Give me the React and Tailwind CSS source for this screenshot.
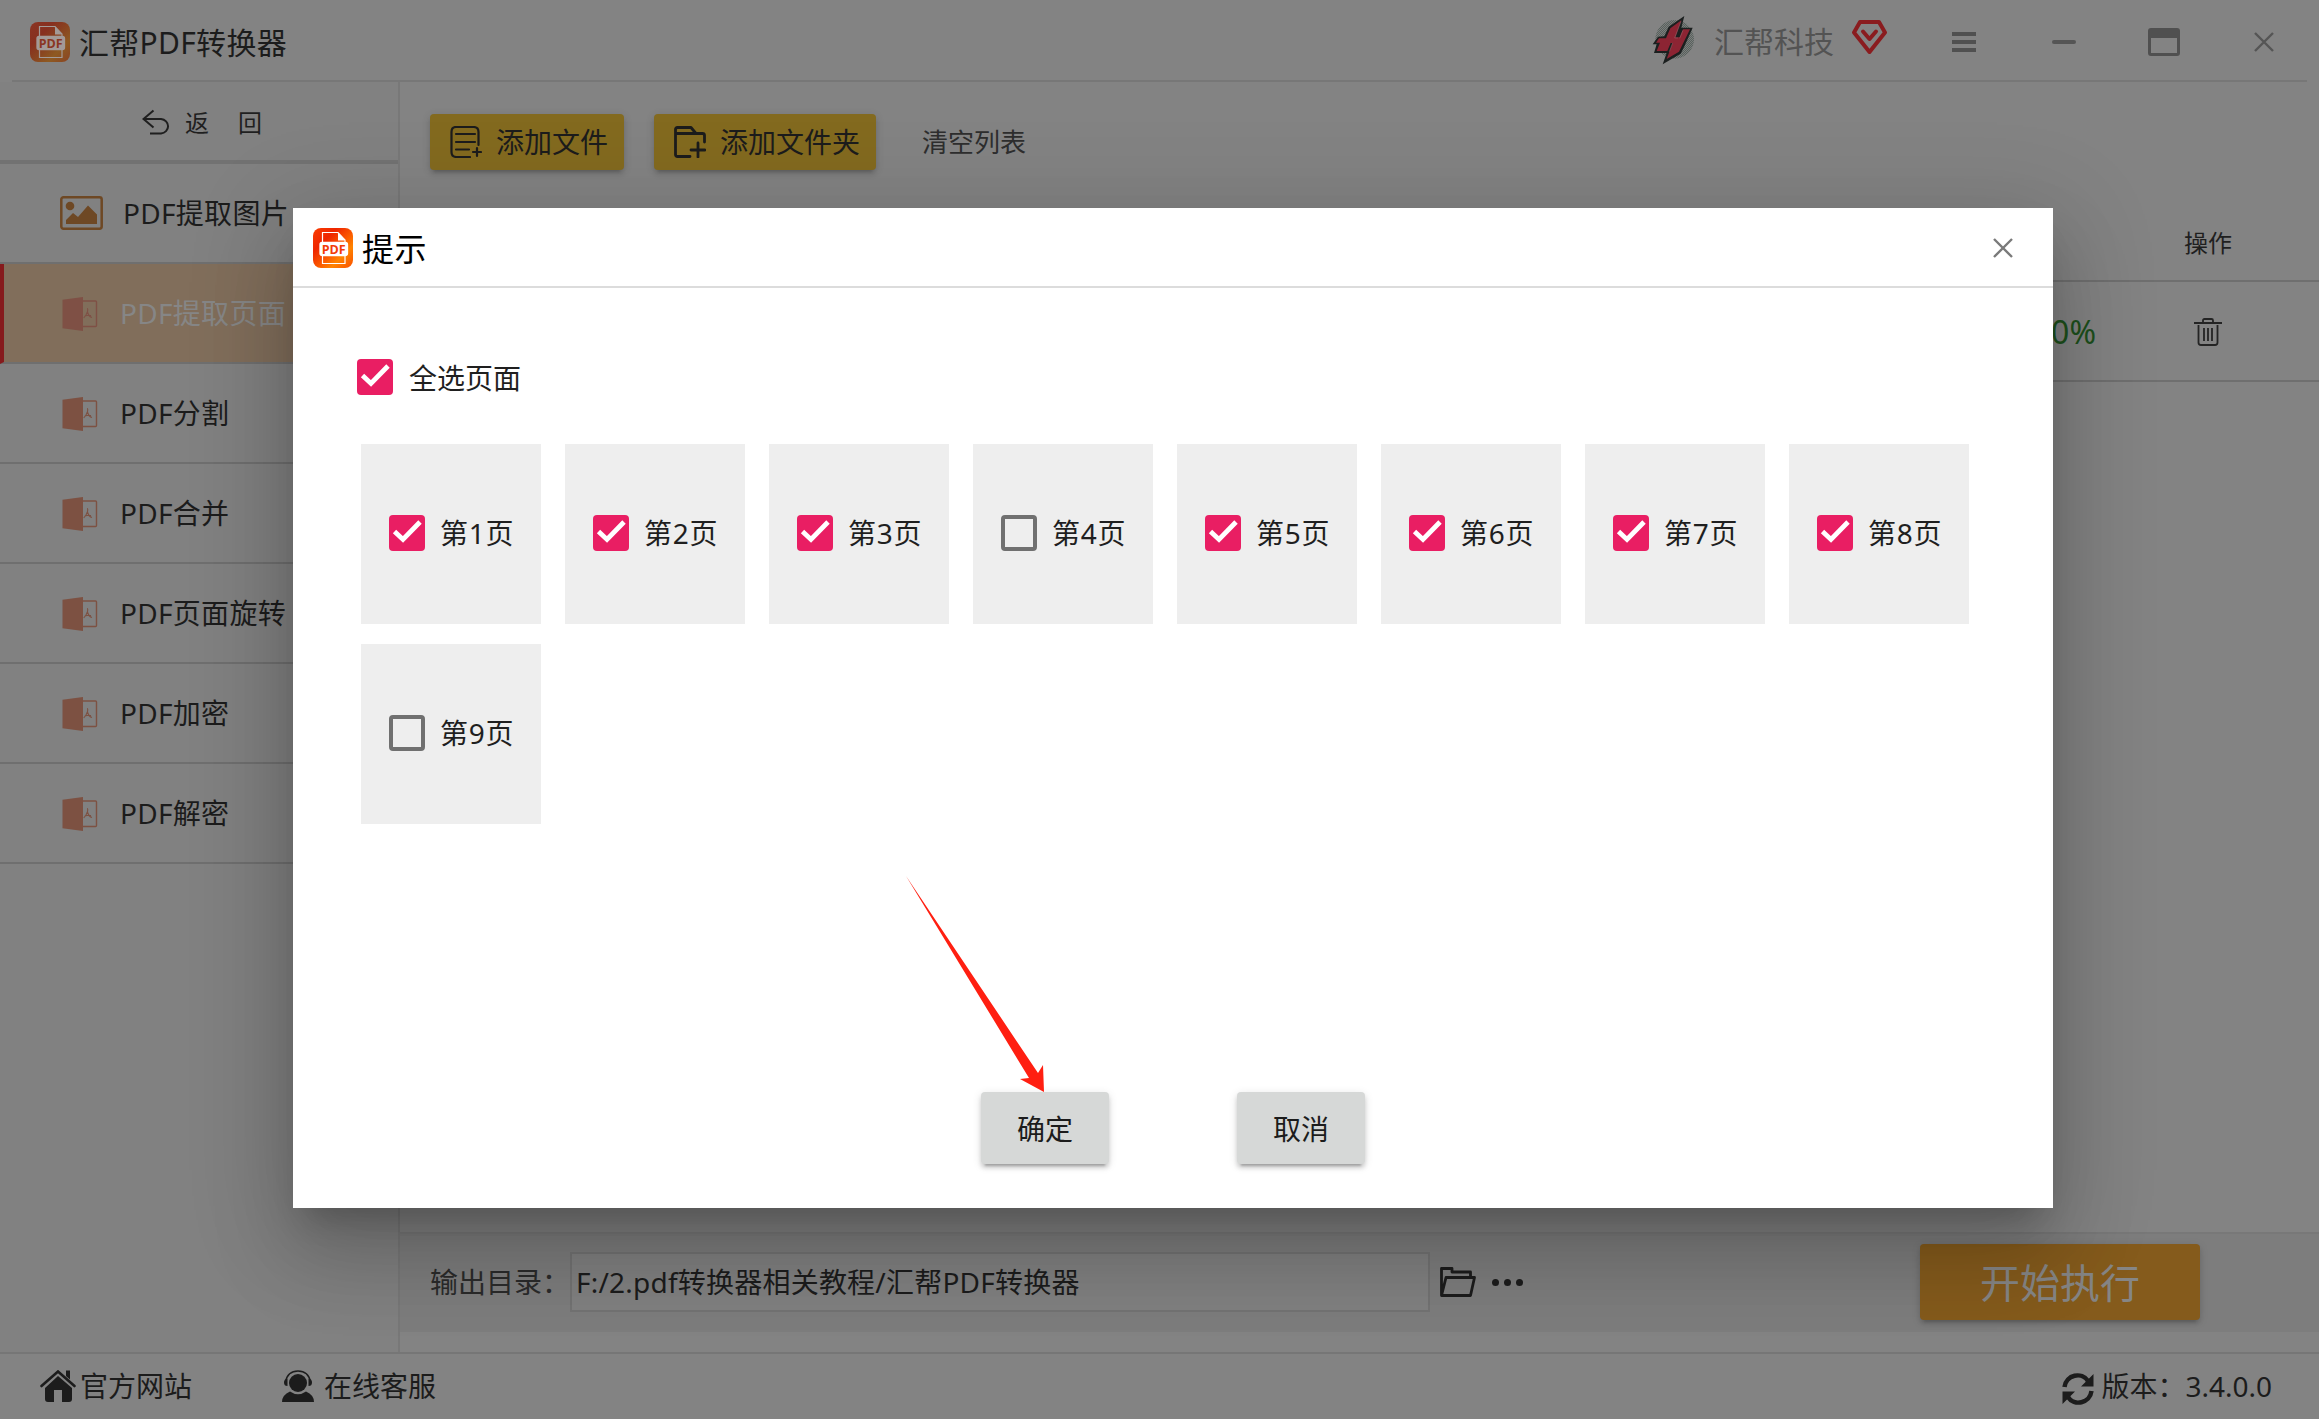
import React from "react";

function AppLogo({ dim }) {
  const id = dim ? "logo-dim" : "logo-bright";
  const stops = dim
    ? ["#8b3423", "#87301f", "#8a4720", "#8e5a22", "#8a4322"]
    : ["#fb3c00", "#ee2600", "#fb5a00", "#ff8400", "#fa4f00"];
  const line = dim ? "#a39a97" : "#ffffff";
  return (
    <svg className="size-10 shrink-0" viewBox="0 0 40 40">
      <defs>
        <linearGradient id={id} x1="0" y1="0" x2="1" y2="1">
          <stop offset="0" stopColor={stops[0]} />
          <stop offset="0.3" stopColor={stops[1]} />
          <stop offset="0.55" stopColor={stops[2]} />
          <stop offset="0.72" stopColor={stops[3]} />
          <stop offset="1" stopColor={stops[4]} />
        </linearGradient>
      </defs>
      <rect width="40" height="40" rx="8" fill={`url(#${id})`} />
      <path d="M9.5 15V4.5H25L32 12v3M9.5 27v8.500H32V27" fill="none" stroke={line} strokeWidth="1.2" />
      <path d="M25 4.500 32 12.500H25z" fill={line} />
      <rect x="7" y="14.5" width="27.5" height="13" rx="2" fill={line} stroke={line} strokeWidth="1.3" />
      <text x="20.7" y="26" textAnchor="middle" fontSize="12.5" fontWeight="700" fill={dim ? "#8a3622" : "#f23c08"} fontFamily="Open Sans, Noto Sans, sans-serif">PDF</text>
    </svg>
  );
}

function PictureIcon() {
  return (
    <svg className="h-[34px] w-[43px]" viewBox="0 0 43 34">
      <rect x="1.3" y="1.3" width="40.4" height="31.4" rx="2.2" fill="none" stroke="#6e4824" strokeWidth="2.5" />
      <circle cx="10" cy="10" r="4.3" fill="#6e4824" />
      <path d="M6 28v-4l7-7 5 4L28 9.500l9 9V28z" fill="#6e4824" />
    </svg>
  );
}

function DocIcon({ active }) {
  const c = active ? "#7f5045" : "#7d5142";
  return (
    <svg className="mt-[2px] h-[34px] w-9" viewBox="0 0 36 34">
      <path d="M.5 2.800 21 0v34L.5 31.200z" fill={c} />
      <path d="M21 4h12.500q1 0 1 1v23.500q0 1-1 1H21" fill="none" stroke={c} strokeWidth="1.4" />
      <path d="M25 11.500c1.500 0 .8 5-3.300 9.500M25.300 14.500c1 3.500 2.500 5.500 4.700 6M22.500 19.200c2-.9 4.500-1.200 6.500-.7" fill="none" stroke={c} strokeWidth="1.1" />
    </svg>
  );
}

function BrandMark() {
  return (
    <svg className="h-[50px] w-[43px]" viewBox="36 42 129 150">
      <defs>
        <pattern id="weave" width="6" height="6" patternUnits="userSpaceOnUse">
          <rect width="6" height="6" fill="#7a7e7c" />
          <path d="M0 0h3v3H0zM3 3h3v3H3z" fill="#59605d" />
        </pattern>
      </defs>
      <circle cx="104" cy="115" r="58" fill="url(#weave)" />
      <path d="M133 45 86 77 73 106 54 107 38 130 50 130 42 156 80 156 68 190 122 158 134 134 158 80 124 80z" fill="#1b1f1f" />
      <path d="M124 58 91 82 78 112 57 112 48 125 60 125 50 150 82 150 92 126 98 126 80 174 117 152 128 130 150 85 129 85 119 109 106 109z" fill="#8c2433" />
      <path d="M123 61 104 111 114 111M98 126 88 152M129 88 119 112" fill="none" stroke="#9a7377" strokeWidth="1.400" />
    </svg>
  );
}

function CloseIcon({ color }) {
  return (
    <svg className="size-5" viewBox="0 0 20 20">
      <path d="M1 1 19 19M19 1 1 19" stroke={color} strokeWidth="2.400" />
    </svg>
  );
}

function TitleBar() {
  return (
    <header className="flex h-20 shrink-0 items-center pl-[30px] pr-[45px] pt-1">
      <AppLogo dim />
      <span className="ml-[9px] pt-[2px] text-[30px] tracking-[0.3px] text-[#1c1c1c]">汇帮PDF转换器</span>
      <div className="ml-auto flex items-center">
        <div className="mb-[5px]"><BrandMark /></div>
        <span className="ml-[19px] text-[30px] text-[#535353]">汇帮科技</span>
        <svg className="mb-[10px] ml-[17px] h-9 w-9" viewBox="0 0 36 36">
          <path d="M9 3h19l6 10.500L18.500 33 3 13.500z" fill="none" stroke="#8a1c1f" strokeWidth="4" strokeLinejoin="round" />
          <path d="M12 12.500 18.500 20 25 12.500" fill="none" stroke="#8a1c1f" strokeWidth="4" strokeLinecap="round" strokeLinejoin="round" />
        </svg>
        <div className="ml-[65px] flex w-6 flex-col gap-1">
          <i className="h-1 bg-[#505050]" />
          <i className="h-1 bg-[#505050]" />
          <i className="h-1 bg-[#505050]" />
        </div>
        <i className="ml-[76px] h-1 w-6 rounded-full bg-[#555]" />
        <i className="ml-[72px] h-7 w-8 rounded-[3px] border-[3px] border-t-[10px] border-[#505050]" />
        <div className="ml-[74px]"><CloseIcon color="#555" /></div>
      </div>
    </header>
  );
}

const MENU = ["PDF提取图片", "PDF提取页面", "PDF分割", "PDF合并", "PDF页面旋转", "PDF加密", "PDF解密"];

function Sidebar() {
  return (
    <aside className="w-[400px] shrink-0 border-r-2 border-[#787878] bg-[#818181]">
      <div className="flex h-[82px] items-center border-b-4 border-[#727272] pl-[142px] pt-1">
        <svg className="mb-[2px] h-[26px] w-7" viewBox="0 0 28 26">
          <path d="M11.500 1.500 1.500 10 11.500 18.500M1.500 10H19a8 7.300 0 0 1 0 14.500H8" fill="none" stroke="#1f1f1f" strokeWidth="2" />
        </svg>
        <span className="ml-[15px] text-2xl text-[#1f1f1f]">返</span>
        <span className="ml-[29px] text-2xl text-[#1f1f1f]">回</span>
      </div>
      {MENU.map((label, i) => {
        const active = i === 1;
        return (
          <div
            key={label}
            className={`flex h-[100px] items-center border-b-2 border-[#6f6f6f] text-[28px] tracking-[0.3px] ${
              active ? "border-l-4 border-l-[#861a1c] bg-[#816e5b] pl-[58px] text-[#868686]" : i === 0 ? "pl-[60px] text-[#1c1c1c]" : "pl-[62px] text-[#1c1c1c]"
            }`}
          >
            {i === 0 ? <PictureIcon /> : <DocIcon active={active} />}
            <span className={i === 0 ? "ml-5" : "ml-[22px]"}>{label}</span>
          </div>
        );
      })}
    </aside>
  );
}

function Toolbar() {
  const btn =
    "flex h-14 items-center rounded bg-[#836a1f] text-[28px] text-[#1c1c1c] shadow-[0_6px_2px_-4px_rgba(0,0,0,0.1),0_4px_4px_rgba(0,0,0,0.1),0_2px_10px_rgba(0,0,0,0.12)]";
  return (
    <div className="flex h-[114px] items-center gap-[30px] pl-[30px] pt-[6px]">
      <button className={`${btn} w-[194px] pl-5`}>
        <svg className="h-8 w-8" viewBox="0 0 32 32" fill="none" stroke="#1c1c1c" strokeWidth="2.200" strokeLinecap="round">
          <path d="M28.500 19V6q0-5-5-5H6Q1.500 1 1.500 6v20q0 5 5 5H20M6 8h19M6 16h19M6 23.500h13M27 22v8M23 26h8" />
        </svg>
        <span className="ml-[14px]">添加文件</span>
      </button>
      <button className={`${btn} w-[222px] pl-5`}>
        <svg className="h-8 w-8" viewBox="0 0 32 32" fill="none" stroke="#1c1c1c" strokeWidth="2.800" strokeLinecap="round" strokeLinejoin="round">
          <path d="M16 30.500H3.500Q1.500 30.500 1.500 28.500V3.500Q1.500 1.500 3.500 1.500H17l5 6H28.500Q30.500 7.500 30.500 9.500V16M1.500 7.500H22M24 17v14M17 24h14" />
        </svg>
        <span className="ml-[14px]">添加文件夹</span>
      </button>
      <span className="ml-4 text-[26px] text-[#2e2e2e]">清空列表</span>
    </div>
  );
}

function FileTable() {
  return (
    <div className="flex-1">
      <div className="flex h-[86px] items-center justify-end border-b-2 border-[#6f6f6f] pr-[87px] pt-[10px] text-2xl text-[#1f1f1f]">操作</div>
      <div className="flex h-[100px] items-center justify-end border-b-2 border-[#6f6f6f] pr-[97px] pt-[2px]">
        <span className="mr-[98px] text-[32px] text-[#1d501c]">100%</span>
        <svg className="h-7 w-7" viewBox="0 0 28 28" fill="none" stroke="#242424" strokeWidth="1.800">
          <path d="M0 5h28M9 5V2.500Q9 1 10.500 1h7Q19 1 19 2.500V5M4.500 7v17.500Q4.500 27 7 27h14q2.500 0 2.500-2.500V7M10 10v13M14 10v13M18 10v13" />
        </svg>
      </div>
    </div>
  );
}

function OutputBar() {
  return (
    <div className="mb-5 flex h-[100px] items-center border-t-2 border-[#787878] bg-[#7d7d7d] pb-[2px] pl-[30px] text-[28px] text-[#1c1c1c]">
      <span lang="zh-CN" className="w-[140px] whitespace-nowrap text-[#2b2b2b]">{"输出目录\uff1a"}</span>
      <div className="flex h-[60px] w-[860px] items-center border-2 border-[#737373] bg-[#818181] pl-1 tracking-[0.22px]">
        F:/2.pdf转换器相关教程/汇帮PDF转换器
      </div>
      <svg className="ml-[10px] h-[30px] w-9" viewBox="0 0 36 30" fill="none" stroke="#1c1c1c" strokeWidth="2.800" strokeLinejoin="round">
        <path d="M1.500 28V1.500H12V5h18.500v5.500M1.500 28.500 6 10.500H34.500L30.500 28.500z" />
      </svg>
      <div className="ml-4 flex gap-[5px]">
        <i className="size-[7px] rounded-full bg-[#1c1c1c]" />
        <i className="size-[7px] rounded-full bg-[#1c1c1c]" />
        <i className="size-[7px] rounded-full bg-[#1c1c1c]" />
      </div>
      <button className="ml-auto mr-[119px] h-[76px] w-[280px] rounded bg-[#855b1c] pt-[2px] text-[40px] text-[#868686] shadow-[0_6px_2px_-4px_rgba(0,0,0,0.1),0_4px_4px_rgba(0,0,0,0.1),0_2px_10px_rgba(0,0,0,0.12)]">
        开始执行
      </button>
    </div>
  );
}

function Footer() {
  return (
    <footer className="flex h-[67px] shrink-0 items-center border-t-2 border-[#767676] pb-[2px] pl-10 pr-[47px] text-[28px] text-[#1c1c1c]">
      <svg className="h-8 w-9" viewBox="0 0 36 32" fill="#1c1c1c">
        <path d="M1.500 16 18 1.500 34.500 16" fill="none" stroke="#1c1c1c" strokeWidth="2.600" strokeLinecap="round" />
        <path d="M26 .5h4v9l-4-3.500zM18 6 32 18v11q0 3-3 3h-7V20h-8v12H8q-3 0-3-3V18z" />
      </svg>
      <span className="ml-1">官方网站</span>
      <svg className="ml-[90px] h-8 w-8" viewBox="0 0 32 32" fill="#1c1c1c">
        <circle cx="16" cy="13" r="9" />
        <path d="M3.500 12C5 4 10 1 16 1s11 3 12.500 11" fill="none" stroke="#1c1c1c" strokeWidth="1.500" />
        <path d="M5.500 8.500v7.500Q2 16 2 12.500T5.500 8.500zM26.500 8.500v7.500q3.500 0 3.500-3.500t-3.500-4zM0 32q0-7 8-10.500Q16 27 24 21.500 32 25 32 32z" />
      </svg>
      <span className="ml-[10px]">在线客服</span>
      <svg className="ml-auto mt-[6px] h-8 w-8" viewBox="0 0 32 32" fill="none" stroke="#1c1c1c" strokeWidth="4.500">
        <path d="M2.500 14C4 1.500 20 -1.500 26 8M29.500 18C28 30.500 12 33.500 6 24" />
        <path d="M31.500 1v12.500H19zM.5 31V18.500H13z" fill="#1c1c1c" stroke="none" />
      </svg>
      <span lang="zh-CN" className="ml-[7px]">{"版本\uff1a3.4.0.0"}</span>
    </footer>
  );
}

function Checkbox({ checked }) {
  if (!checked) return <i className="size-9 shrink-0 rounded border-4 border-[#707070]" />;
  return (
    <svg className="size-9 shrink-0" viewBox="0 0 36 36">
      <rect width="36" height="36" rx="4" fill="#e91e63" />
      <path d="M5.500 16.500 14 24.500 31 7" fill="none" stroke="#fff" strokeWidth="4.800" />
    </svg>
  );
}

const UNCHECKED = [4, 9];

function Dialog() {
  const btn =
    "h-[72px] w-32 rounded bg-[#d6d8d7] pt-[2px] text-[28px] text-[#1c1c1c] shadow-[0_6px_2px_-4px_rgba(0,0,0,0.2),0_4px_4px_rgba(0,0,0,0.14),0_2px_10px_rgba(0,0,0,0.12)]";
  return (
    <div className="absolute left-[293px] top-[208px] flex h-[1000px] w-[1760px] flex-col bg-white shadow-[0_22px_30px_-14px_rgba(0,0,0,0.2),0_48px_76px_6px_rgba(0,0,0,0.14),0_18px_92px_16px_rgba(0,0,0,0.12)]">
      <div className="flex h-20 shrink-0 items-center border-b-2 border-[#dcdcdc] pl-5 pr-10 pt-[2px]">
        <AppLogo />
        <span className="ml-[9px] pt-[2px] text-[32px] tracking-[0.5px] text-black">提示</span>
        <div className="ml-auto"><CloseIcon color="#7a7a7a" /></div>
      </div>
      <div className="mt-[71px] flex h-9 items-center pl-16">
        <Checkbox checked />
        <span className="ml-4 pt-[2px] text-[28px] text-[#1f1f1f]">全选页面</span>
      </div>
      <div className="mt-[49px] grid grid-cols-[repeat(8,180px)] gap-x-6 gap-y-5 pl-[68px]">
        {Array.from({ length: 9 }, (_, i) => i + 1).map((n) => (
          <div key={n} className="flex h-[180px] items-center bg-[#eee] pb-[2px] pl-7">
            <Checkbox checked={!UNCHECKED.includes(n)} />
            <span className="ml-[15px] text-[28px] tracking-[0.8px] text-[#1f1f1f]">{`第${n}页`}</span>
          </div>
        ))}
      </div>
      <div className="mb-11 mt-auto flex justify-center gap-32">
        <button className={btn}>确定</button>
        <button className={btn}>取消</button>
      </div>
      <svg className="absolute left-[612px] top-[666px] h-[220px] w-[142px]" viewBox="0 0 142 220">
        <path d="M1 2 133 199 138 191 139 218 115 205 124 204z" fill="#ff1f11" />
      </svg>
    </div>
  );
}

export default function App() {
  return (
    <div className="relative flex h-[1419px] w-[2319px] flex-col overflow-hidden bg-[#838383] font-['Noto_Sans','Noto_Sans_CJK_SC',sans-serif] leading-none">
      <TitleBar />
      <div className="mx-3 h-[2px] shrink-0 bg-[#777]" />
      <div className="flex flex-1">
        <Sidebar />
        <main className="flex flex-1 flex-col">
          <Toolbar />
          <FileTable />
          <OutputBar />
        </main>
      </div>
      <Footer />
      <Dialog />
    </div>
  );
}
